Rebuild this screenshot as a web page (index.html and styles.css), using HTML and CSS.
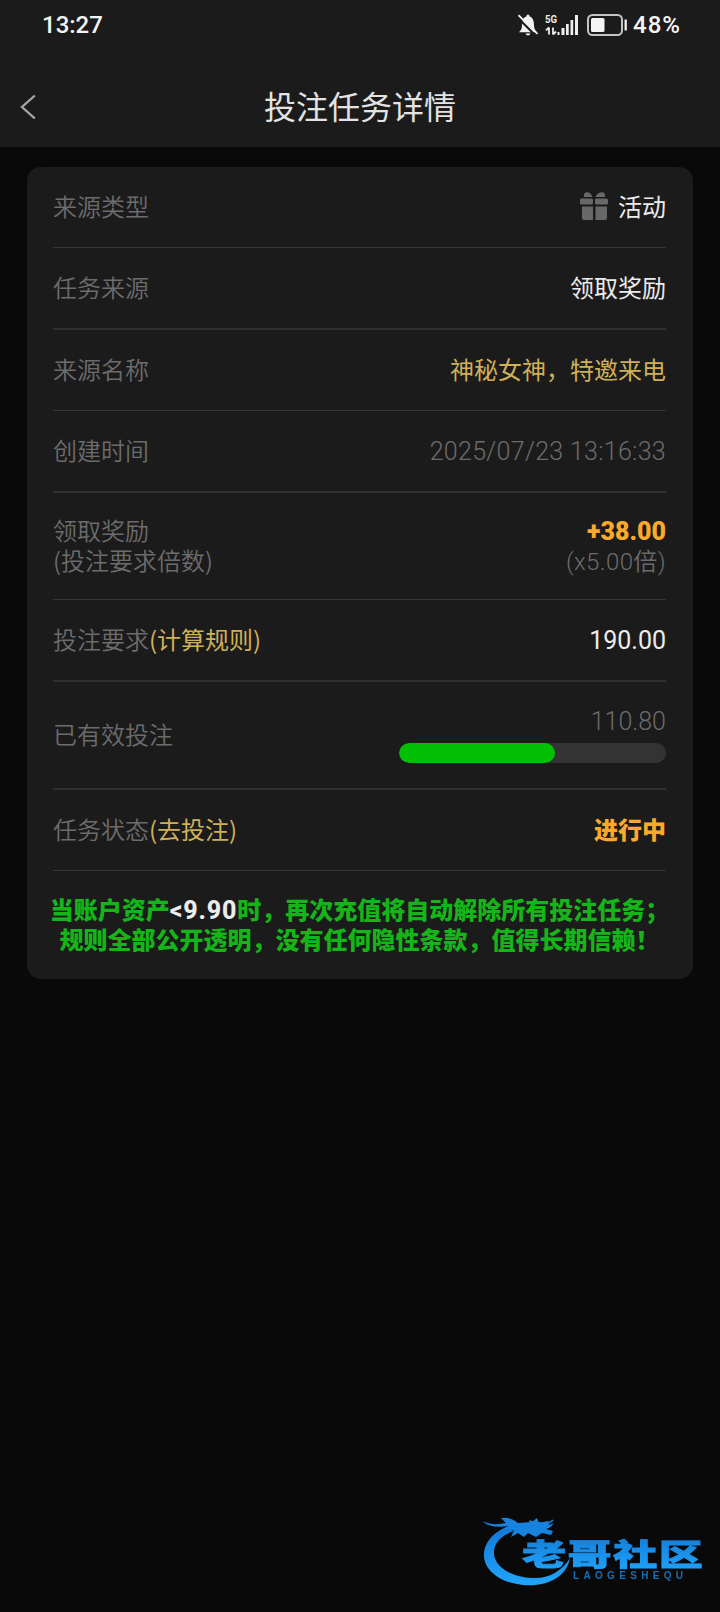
FILE: index.html
```html
<!DOCTYPE html>
<html lang="zh-CN">
<head>
<meta charset="utf-8">
<title>投注任务详情</title>
<link rel="stylesheet" href="styles.css">
</head>
<body>
<header class="top">
  <div class="status">
    <span class="clock">13:27</span>
    <div class="indicators">
      <svg class="bell" width="20" height="22" viewBox="0 0 20 22"><path d="M1 18.200c2-2 3-3.600 3-7C4 6 6 3.200 8.500 2.600V2q0-1.500 1.500-1.500T11.500 2v.6C14 3.200 16 6 16 11c0 3.600 1 5.200 3 7.200zM7.500 19.500h5q-.7 2-2.500 2t-2.500-2z" fill="#f2f2f2"/><path d="M-.8 3.200 17 21" stroke="#1b1b1b" stroke-width="2"/><path d="M.5 1.200 19.500 20" stroke="#f2f2f2" stroke-width="1.700"/></svg>
      <svg class="signal" width="34" height="24" viewBox="0 0 34 24"><text class="net" x="0" y="10" textLength="12" lengthAdjust="spacingAndGlyphs">5G</text><path d="M4 14.500v7M4 14.300 1 17.300M8 14.500v7M8 21.500l3-3" stroke="#eee" stroke-width="1.800" fill="none"/><path d="M12.500 19h2v3h-2zM16.500 15h3v7h-3zM21 11h2.700v11H21zM25.500 7h2.700v15h-2.700zM30 2h3v20h-3z" fill="#eee"/></svg>
      <svg class="battery" width="41" height="22" viewBox="0 0 41 22"><rect x="1" y="1" width="34" height="20" rx="4.500" fill="none" stroke="#c4c4c4" stroke-width="2"/><rect x="4" y="4" width="13.500" height="14" rx="1.500" fill="#f5f5f5"/><path d="M38.700 5.500v11" stroke="#eee" stroke-width="2.300"/></svg>
      <span class="percent">48%</span>
    </div>
  </div>
  <nav class="nav">
    <svg class="back" width="17" height="26" viewBox="0 0 17 26"><path d="M14.200 2.200 2 13l12.200 10.800" fill="none" stroke="#a2a2a2" stroke-width="2.300" stroke-linecap="round"/></svg>
    <h1 class="title">投注任务详情</h1>
  </nav>
</header>

<main class="card">
  <div class="row"><span>来源类型</span>
    <span class="kind"><svg width="28" height="28" viewBox="0 0 28 28" fill="#686868"><path d="M12.500 5H4V3q0-3 3.500-2.700Q11 1 12.500 5zM15.500 5H25V3q0-3-3.500-2.700Q17 1 15.500 5z"/><rect y="6.500" width="13" height="6" rx="1.500"/><rect x="15" y="6.500" width="13" height="6" rx="1.500"/><path d="M2 14.500h11V28H4q-2 0-2-2zM15.500 14.500H27V26q0 2-2 2h-9.500z"/></svg><span class="white">活动</span></span></div>
  <div class="row thick"><span>任务来源</span><span class="white">领取奖励</span></div>
  <div class="row"><span>来源名称</span><span class="gold">神秘女神，特邀来电</span></div>
  <div class="row thick"><span>创建时间</span><span class="num date">2025/07/23 13:16:33</span></div>
  <div class="row double"><div class="lines"><span>领取奖励</span><span>(投注要求倍数)</span></div><div class="lines right"><b class="num orange">+38.00</b><span class="num mixed">(x5.00倍)</span></div></div>
  <div class="row thick"><span>投注要求<span class="gold">(计算规则)</span></span><span class="num white">190.00</span></div>
  <div class="row thick progress-row"><span>已有效投注</span><div class="progress"><span class="num">110.80</span><div class="track"><div class="fill" style="width:58.300%"></div></div></div></div>
  <div class="row"><span>任务状态<span class="gold">(去投注)</span></span><b class="orange">进行中</b></div>
  <p class="notice">当账户资产<span class="limit">&lt;9.90</span>时，再次充值将自动解除所有投注任务；<br>规则全部公开透明，没有任何隐性条款，值得长期信赖！</p>
</main>

<svg class="brand" width="224" height="76" viewBox="480 1514 224 76">
  <defs><linearGradient id="blue" x1="0" y1="0" x2="0" y2="1"><stop offset="0" stop-color="#1277d4"/><stop offset="1" stop-color="#20a5fb"/></linearGradient></defs>
  <path d="M506 1527C490 1534 483 1546 484 1557C486 1575 509 1587 535 1585C554 1583 567 1574 570 1558C561 1572 548 1579 532 1578C511 1577 495 1567 494 1554C493 1544 501 1535 514 1531Z" fill="url(#blue)"/>
  <path d="M482 1521Q492 1526 506 1523L501 1518Q511 1517 518 1523L532 1522L537 1518L539 1523L548 1521L549 1525L554 1523Q551 1528 546 1529L553 1531L551 1535L542 1533L536 1537L528 1533L524 1537L518 1533L511 1537L514 1530L503 1529L508 1526Q491 1529 482 1521Z" fill="#1783df"/>
  <path d="M529 1521Q548 1526 553 1520" fill="none" stroke="#1783df" stroke-width="1.500"/>
  <text class="brand-name" transform="translate(522 1565) scale(1.470 1)" fill="url(#blue)" stroke="url(#blue)" stroke-width=".8" textLength="123" lengthAdjust="spacing">老哥社区</text>
  <text class="brand-latin" x="573" y="1578.500" textLength="110" lengthAdjust="spacing">LAOGESHEQU</text>
</svg>
</body>
</html>
```
FILE: styles.css
```css
* { box-sizing: border-box; }
body {
  margin: 0;
  height: 1612px;
  display: flex;
  flex-direction: column;
  background: #090909;
  color: #6c6c6c;
  font: 350 24px/30px "Noto Sans CJK SC", sans-serif;
}
.top { height: 147px; background: #1b1b1b; }
.status {
  height: 48px;
  padding: 1px 39px 0 42px;
  display: flex;
  align-items: center;
  justify-content: space-between;
  color: #f4f4f4;
  font-family: Roboto, sans-serif;
  font-weight: 500;
}
.indicators { display: flex; align-items: center; margin-left: -1px; }
.signal { margin-left: 7px; }
.net { font: 700 11px Roboto, sans-serif; fill: #eee; }
.battery { margin-left: 8px; }
.percent { margin-left: 5px; letter-spacing: 1px; }
.nav { height: 99px; display: flex; align-items: center; padding: 19px 20px 0; }
.title {
  flex: 1;
  margin: -4px 17px 0 0;
  text-align: center;
  color: #e3e3e3;
  font-size: 32px;
  line-height: 40px;
  font-weight: 400;
}
.card {
  width: 666px;
  height: 812px;
  margin: 20px 0 0 27px;
  padding: 0 27px 0 26px;
  border-radius: 14px;
  background: #1b1b1b;
}
.row {
  height: 81px;
  padding-bottom: 2px;
  display: flex;
  align-items: center;
  justify-content: space-between;
  border-bottom: 1px solid #353535;
}
.row.thick { height: 82px; border-bottom: 2px solid #303030; }
.row.double { height: 107px; }
.row.progress-row { height: 108px; }
.lines { display: flex; flex-direction: column; }
.kind { display: flex; align-items: center; gap: 10px; }
.white { color: #ececec; font-weight: 400; }
.gold { color: #cfb059; font-weight: 400; }
.orange { color: #faa92b; font-weight: 900; }
.right { align-items: flex-end; }
.num { padding-top: 2px; margin-bottom: -2px; font-family: Roboto, "Noto Sans CJK SC", sans-serif; font-size: 25px; }
.mixed { padding-top: 2px; margin-bottom: -2px; font-size: 24px; letter-spacing: .4px; }
.date { letter-spacing: .3px; }
.progress { width: 267px; display: flex; flex-direction: column; align-items: flex-end; gap: 8px; }
.track { width: 100%; height: 20px; border-radius: 10px; background: #333; overflow: hidden; }
.fill { height: 100%; border-radius: 10px; background: #04c004; }
.notice {
  margin: 0 -10px;
  padding-top: 23px;
  text-align: center;
  white-space: nowrap;
  color: #15b51a;
  font-weight: 900;
}
.limit { color: #ececec; font: 800 25px/1px Roboto, sans-serif; letter-spacing: .8px; }
.brand { margin: auto 16px 22px auto; display: block; filter: blur(.6px); }
.brand-name { font: 900 30px "Noto Sans CJK SC", sans-serif; }
.brand-latin { font: 700 10px "Liberation Sans", sans-serif; fill: #1471b8; }
```
